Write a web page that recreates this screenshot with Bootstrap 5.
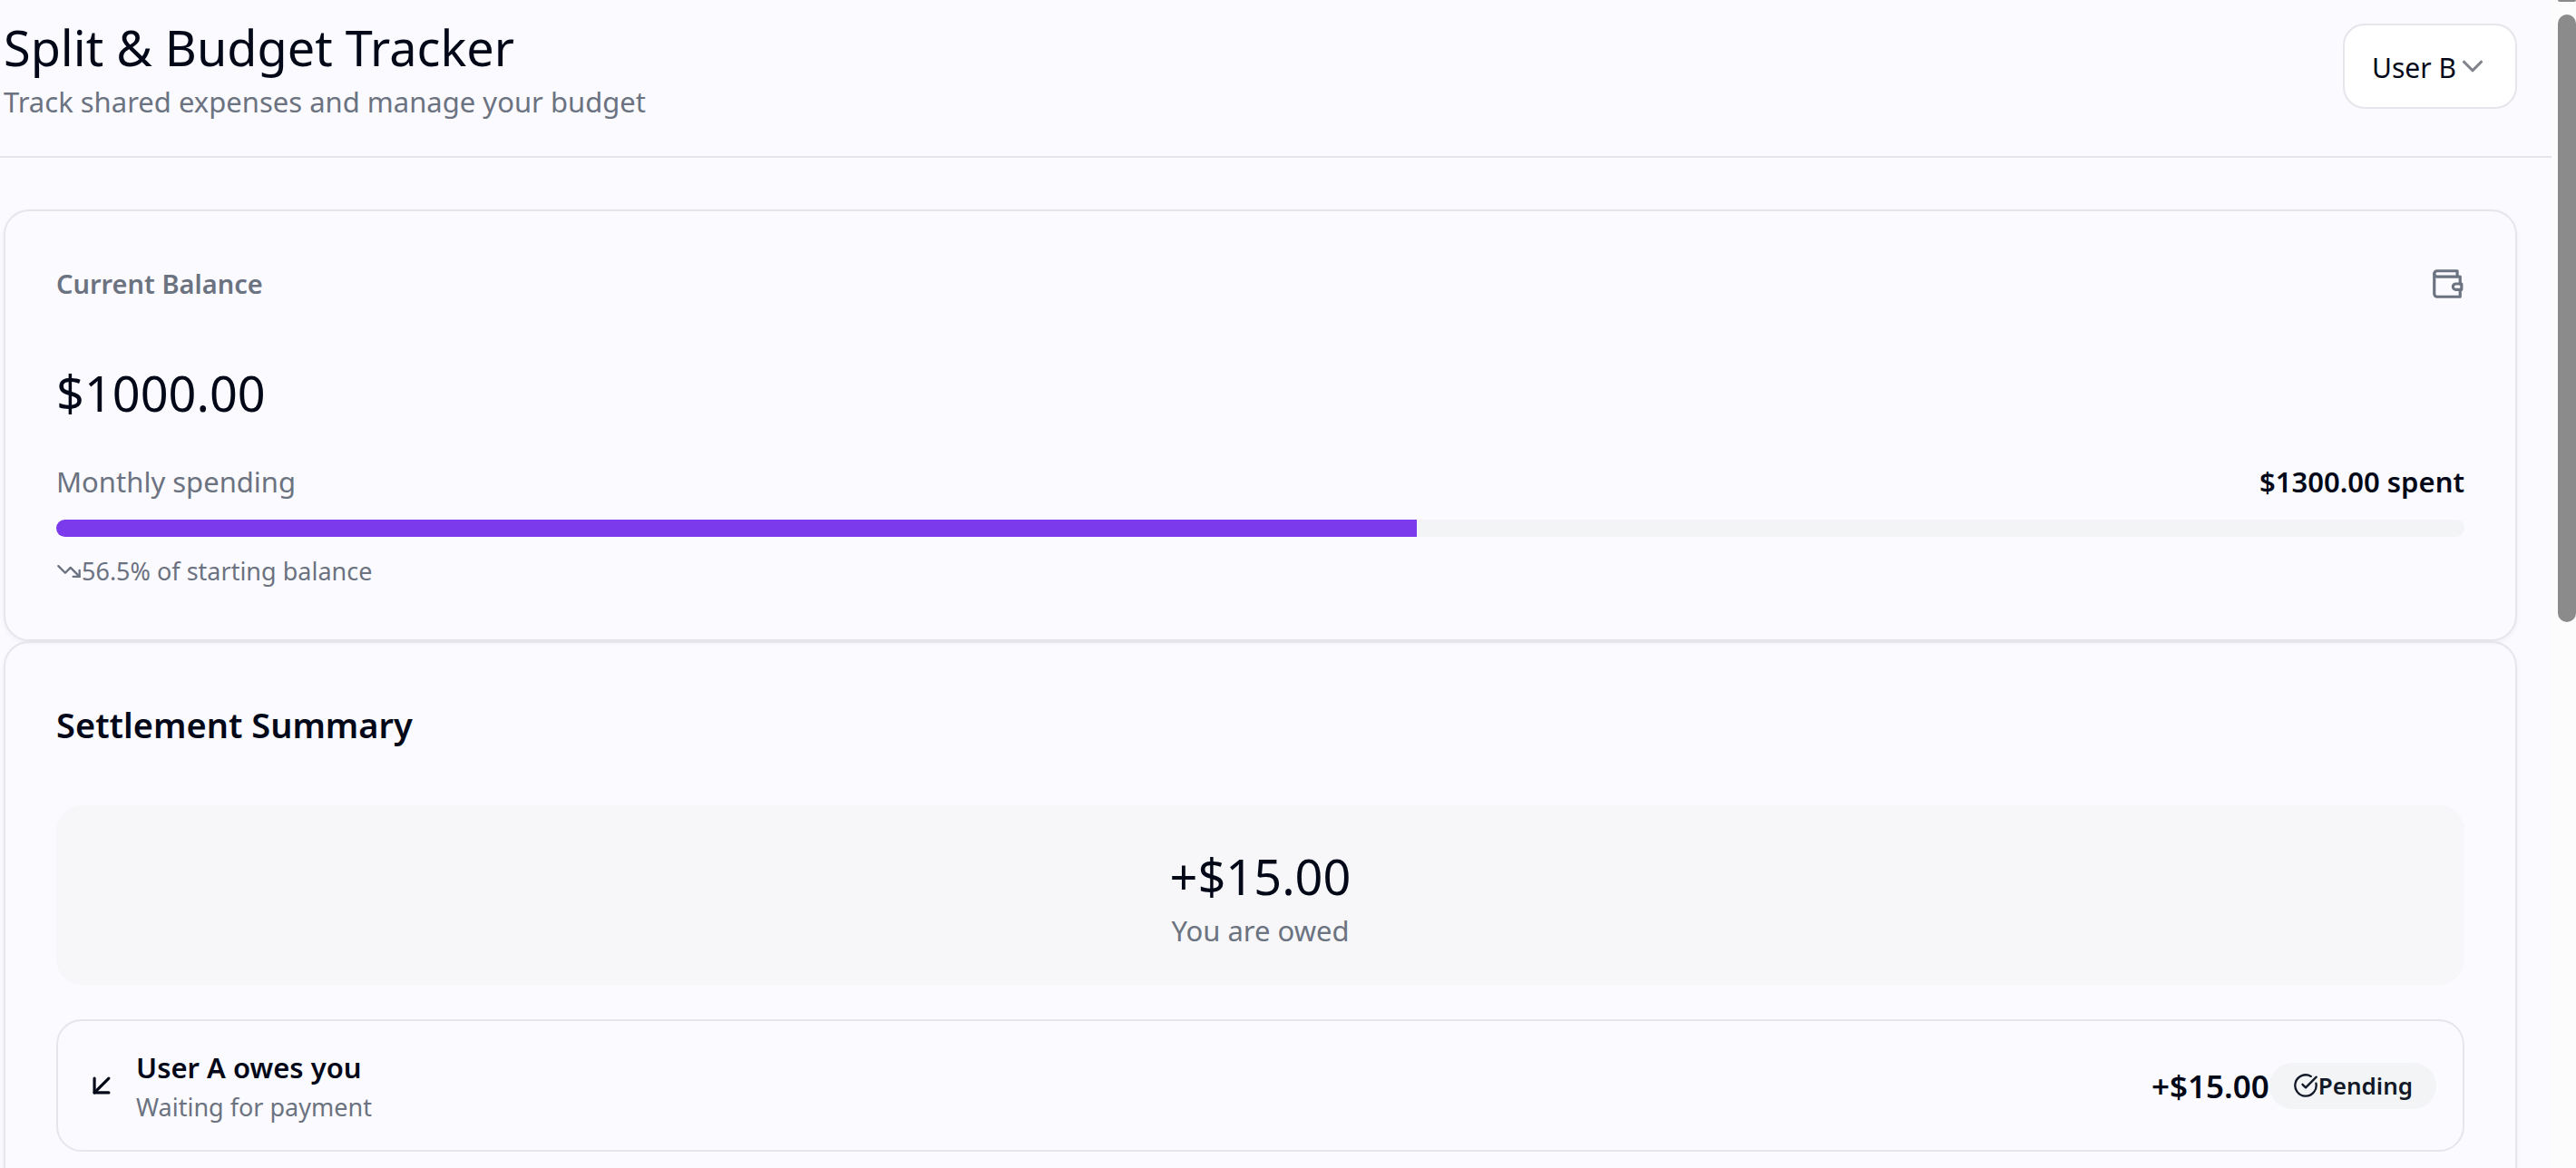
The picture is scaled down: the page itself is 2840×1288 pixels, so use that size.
<!DOCTYPE html>
<html lang="en">
<head>
<meta charset="utf-8">
<meta name="viewport" content="width=device-width, initial-scale=1">
<title>Split &amp; Budget Tracker</title>
<link href="https://cdn.jsdelivr.net/npm/bootstrap@5.3.0/dist/css/bootstrap.min.css" rel="stylesheet">
<style>
  :root { --ink: #020817; --muted: #6b7280; --line: #e5e5eb; --soft: #f3f4f6; --violet: #7c3aed; }
  body { font-family: "Noto Sans", "Open Sans", sans-serif; color: var(--ink); background: #fbfaff; font-size: 31px; line-height: 47px; }
  .page-head { border-bottom: 2px solid var(--line); padding: 15px 38px 36px 4px; }
  .page-body { padding: 57px 38px 57px 4px; }
  .hero-text { font-size: 54px; line-height: 74px; font-weight: 400; }
  .title-text { font-size: 38px; line-height: 68px; font-weight: 600; }
  .label-text { font-size: 29px; line-height: 47px; font-weight: 600; }
  .amount-text { font-size: 35px; font-weight: 600; }
  .small-text { font-size: 27px; line-height: 39px; }
  .muted-text { color: var(--muted); }
  .balance-value { margin: 60px 0 38px; }
  .user-select { width: auto; height: 94px; margin-top: 11px; padding: 2px 65px 0 30px; border: 2px solid var(--line); border-radius: 24px; color: var(--ink); font-size: 30px;
    background: #fff url("data:image/svg+xml,%3Csvg xmlns='http://www.w3.org/2000/svg' viewBox='0 0 24 24' fill='none' stroke='%2380828c' stroke-width='2' stroke-linecap='round' stroke-linejoin='round'%3E%3Cpath d='m6 9 6 6 6-6'/%3E%3C/svg%3E") no-repeat right 28px center / 38px 38px; }
  .panel { background: transparent; border: 2px solid var(--line); border-radius: 28px; padding: 56px; box-shadow: 0 2px 5px rgba(0,0,0,.05); color: var(--ink); }
  .icon { fill: none; stroke: currentColor; stroke-width: 2; stroke-linecap: round; stroke-linejoin: round; flex: none; width: 38px; height: 38px; }
  .icon-sm { width: 28px; height: 28px; }
  .spend-bar { height: 19px; border-radius: 10px; background: var(--soft); margin: 18px 0; }
  .spend-bar .progress-bar { background: var(--violet); }
  .owed-box { background: #f7f7f9; border-radius: 28px; padding: 41px 38px 36px; margin: 55px 0 38px; }
  .debt-row { border: 2px solid var(--line); border-radius: 28px; padding: 28px 29px; gap: 19px; }
  .pill { background: var(--soft); border-radius: 26px; font-size: 26px; line-height: 51px; font-weight: 600; padding: 0 26px; color: #111827; }
  .scroll-track { width: 27px; background: #fcfcfc; padding-left: 7px; }
  .scroll-cap { height: 2px; background: #8b8b8b; margin-bottom: 14px; border-radius: 0 0 4px 4px; }
  .scroll-thumb { height: 52vh; background: #8b8b8b; border-radius: 10px; }
</style>
</head>
<body>
<div class="d-flex vh-100 overflow-hidden">
  <div class="flex-grow-1">
    <header class="page-head d-flex justify-content-between align-items-start">
      <div>
        <h1 class="hero-text mb-0">Split &amp; Budget Tracker</h1>
        <p class="muted-text mb-0">Track shared expenses and manage your budget</p>
      </div>
      <select class="form-select user-select" id="user" aria-label="Current user"><option>User B</option></select>
    </header>
    <main class="page-body">
      <section class="card panel">
        <div class="d-flex justify-content-between align-items-center muted-text">
          <h2 class="label-text mb-0">Current Balance</h2>
          <svg class="icon" viewBox="0 0 24 24" aria-hidden="true"><path d="M21 12V7H5a2 2 0 0 1 0-4h14v4"/><path d="M3 5v14a2 2 0 0 0 2 2h16v-5"/><path d="M18 12a2 2 0 0 0 0 4h4v-4Z"/></svg>
        </div>
        <div class="hero-text balance-value">$1000.00</div>
        <div class="d-flex justify-content-between">
          <span class="muted-text">Monthly spending</span>
          <span class="fw-semibold">$1300.00 spent</span>
        </div>
        <div class="progress spend-bar" role="progressbar" aria-label="Monthly spending" aria-valuenow="56.5" aria-valuemin="0" aria-valuemax="100">
          <div class="progress-bar" style="width:56.5%"></div>
        </div>
        <div class="d-flex align-items-center small-text muted-text">
          <svg class="icon icon-sm" viewBox="0 0 24 24" aria-hidden="true"><path d="m22 17-8.500-8.500-5 5L2 7"/><path d="M16 17h6v-6"/></svg>
          <span>56.5% of starting balance</span>
        </div>
      </section>
      <section class="card panel">
        <h2 class="title-text mb-0">Settlement Summary</h2>
        <div class="owed-box text-center">
          <div class="hero-text">+$15.00</div>
          <div class="muted-text">You are owed</div>
        </div>
        <div class="debt-row d-flex align-items-center">
          <svg class="icon" viewBox="0 0 24 24" aria-hidden="true"><path d="M17 7 7 17"/><path d="M17 17H7V7"/></svg>
          <div class="flex-grow-1">
            <div class="fw-semibold">User A owes you</div>
            <div class="small-text muted-text">Waiting for payment</div>
          </div>
          <div class="d-flex align-items-center">
            <span class="amount-text">+$15.00</span>
            <span class="pill d-flex align-items-center">
              <svg class="icon icon-sm" viewBox="0 0 24 24" aria-hidden="true"><path d="M21.800 10A10 10 0 1 1 17 3.335"/><path d="m9 11 3 3L22 4"/></svg>Pending</span>
          </div>
        </div>
      </section>
    </main>
  </div>
  <div class="scroll-track flex-shrink-0" aria-hidden="true">
    <div class="scroll-cap"></div>
    <div class="scroll-thumb"></div>
  </div>
</div>
<script src="https://cdn.jsdelivr.net/npm/bootstrap@5.3.0/dist/js/bootstrap.bundle.min.js"></script>
</body>
</html>
